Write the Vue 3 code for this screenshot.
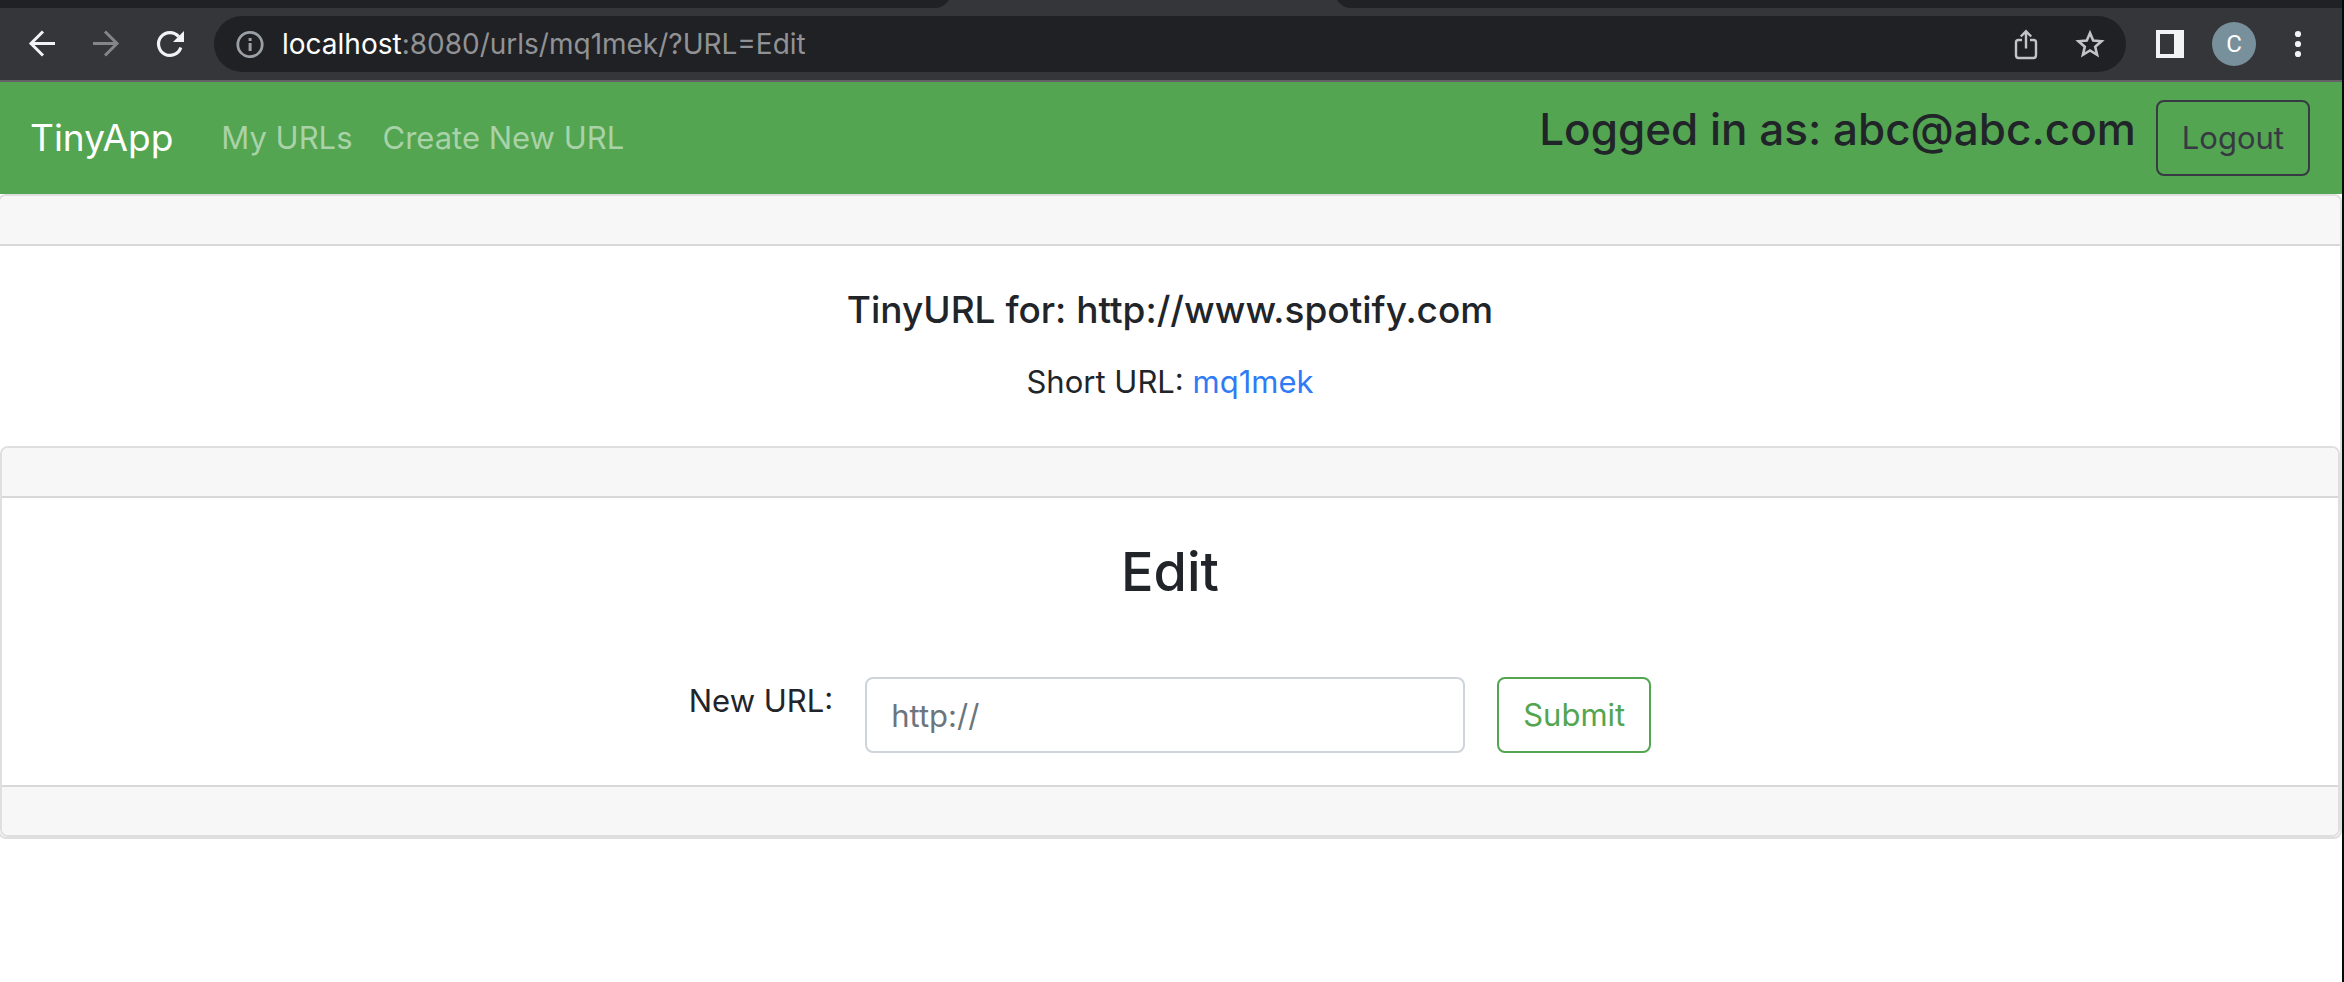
<script setup>
import { ref } from 'vue'

const email = 'abc@abc.com'
const longUrl = 'http://www.spotify.com'
const shortUrl = 'mq1mek'
const newUrl = ref('')
</script>

<template>
  <div class="window">
    <header class="browser">
      <div class="tabs">
        <span class="tab-left"></span>
        <span class="tab-right"></span>
      </div>
      <div class="toolbar">
        <button class="icon-btn" type="button" aria-label="Back">
          <svg width="32" height="32" viewBox="0 0 32 32" fill="none" stroke="#f1f3f4" stroke-width="3">
            <path d="M29 15.5H5M17 3.5L5 15.5L17 27.5" />
          </svg>
        </button>
        <button class="icon-btn" type="button" aria-label="Forward">
          <svg width="32" height="32" viewBox="0 0 32 32" fill="none" stroke="#84858a" stroke-width="3">
            <path d="M3 15.5H27M15 3.5L27 15.5L15 27.5" />
          </svg>
        </button>
        <button class="icon-btn" type="button" aria-label="Reload">
          <svg width="32" height="32" viewBox="0 0 32 32">
            <path d="M26.8 19.5A11.4 11.4 0 1 1 24.6 8.6" fill="none" stroke="#f1f3f4" stroke-width="3.2" />
            <path d="M30 3V14H19Z" fill="#f1f3f4" />
          </svg>
        </button>
        <div class="omnibox">
          <svg width="28" height="28" viewBox="0 0 28 28">
            <circle cx="14" cy="14.5" r="12.2" fill="none" stroke="#9aa0a6" stroke-width="2.8" />
            <path d="M12.6 8H15.6V11H12.6ZM12.6 13H15.6V21H12.6Z" fill="#9aa0a6" />
          </svg>
          <span class="address"><b>localhost</b>:8080/urls/mq1mek/?URL=Edit</span>
          <button class="icon-btn" type="button" aria-label="Share">
            <svg width="32" height="32" viewBox="0 0 32 32" fill="none" stroke="#c3c4c7" stroke-width="2.4">
              <path d="M12 12H8.5Q6 12 6 14.500V27Q6 30 8.500 30H23.500Q26 30 26 27V14.500Q26 12 23.500 12H20M16 20.500V4M10.800 8.500L16 3.300L21.200 8.500" />
            </svg>
          </button>
          <button class="icon-btn" type="button" aria-label="Bookmark">
            <svg width="32" height="32" viewBox="0 0 32 32" fill="none" stroke="#c3c4c7" stroke-width="2.6">
              <path d="M16 5L19.200 12.600L27.500 13.300L21.200 18.700L23.100 26.800L16 22.500L8.900 26.800L10.800 18.700L4.500 13.300L12.800 12.600Z" />
            </svg>
          </button>
        </div>
        <button class="icon-btn" type="button" aria-label="Side panel">
          <svg width="32" height="32" viewBox="0 0 32 32">
            <path d="M2 2H30V30H2ZM6 6V26H20V6Z" fill="#f1f3f4" fill-rule="evenodd" />
          </svg>
        </button>
        <button class="avatar" type="button" aria-label="Profile">C</button>
        <button class="icon-btn" type="button" aria-label="Menu">
          <svg width="32" height="32" viewBox="0 0 32 32" fill="#f1f3f4">
            <circle cx="16" cy="6" r="3.1" />
            <circle cx="16" cy="16" r="3.1" />
            <circle cx="16" cy="26" r="3.1" />
          </svg>
        </button>
      </div>
    </header>

    <nav class="navbar">
      <a class="brand" href="#">TinyApp</a>
      <a class="nav-link" href="#">My URLs</a>
      <a class="nav-link" href="#">Create New URL</a>
      <form class="account" @submit.prevent>
        <h3>Logged in as: {{ email }}</h3>
        <button class="btn dark" type="submit">Logout</button>
      </form>
    </nav>

    <main class="card outer">
      <div class="strip top"></div>
      <section class="details">
        <h5>TinyURL for: {{ longUrl }}</h5>
        <p>Short URL: <a href="#">{{ shortUrl }}</a></p>
      </section>
      <section class="card inner">
        <div class="strip top"></div>
        <div class="edit">
          <h2>Edit</h2>
          <form class="edit-form" @submit.prevent>
            <label for="new-url">New URL:</label>
            <input id="new-url" v-model="newUrl" type="text" placeholder="http://" />
            <button class="btn green" type="submit">Submit</button>
          </form>
        </div>
        <div class="strip bottom"></div>
      </section>
    </main>
  </div>
</template>

<style>
body {
  margin: 0;
  background: #fff;
}
</style>

<style scoped>
* {
  box-sizing: border-box;
}
.window {
  min-height: 100vh;
  border-right: 2px solid #020b0c;
  overflow: hidden;
  font-family: Inter, "Liberation Sans", sans-serif;
  font-size: 31px;
  line-height: 48px;
  color: #212529;
  background: #fff;
}
button,
input {
  font: inherit;
}
a {
  text-decoration: none;
}
h2,
h3,
h5,
p {
  margin: 0;
}
.browser {
  background: #35363a;
  border-bottom: 2px solid #656166;
}
.tabs {
  display: flex;
  justify-content: space-between;
  align-items: flex-end;
  height: 8px;
  overflow: hidden;
}
.tab-left,
.tab-right {
  flex: none;
  height: 24px;
  background: #202124;
}
.tab-left {
  width: 40.6%;
  border-bottom-right-radius: 16px;
}
.tab-right {
  width: 43%;
  border-bottom-left-radius: 16px;
}
.toolbar {
  display: flex;
  align-items: center;
  gap: 32px;
  height: 72px;
  padding: 0 28px 0 26px;
}
.icon-btn {
  flex: none;
  width: 32px;
  height: 32px;
  padding: 0;
  border: 0;
  background: none;
}
svg {
  display: block;
  flex: none;
}
.omnibox {
  flex: 1;
  display: flex;
  align-items: center;
  gap: 32px;
  height: 56px;
  margin: 0 -4px 0 -4px;
  padding: 0 20px 0 22px;
  border-radius: 28px;
  background: #202124;
}
.address {
  flex: 1;
  margin-left: -14px;
  font-size: 28px;
  color: #919295;
}
.address b {
  font-weight: 400;
  color: #fff;
}
.avatar {
  flex: none;
  width: 44px;
  height: 44px;
  margin: 0 -6px;
  padding: 0;
  border: 0;
  border-radius: 50%;
  font-family: Roboto, sans-serif;
  font-size: 24px;
  line-height: 44px;
  color: #fff;
  background: #78909c;
}
.navbar {
  display: flex;
  align-items: center;
  gap: 30px;
  height: 112px;
  padding: 0 32px 0 30px;
  background: #53a551;
}
.brand {
  margin-right: 18px;
  font-size: 37px;
  color: #fff;
}
.nav-link {
  color: #a9d2a8;
}
.account {
  display: flex;
  gap: 20px;
  margin-left: auto;
}
h3 {
  font-size: 44px;
  line-height: 58px;
  font-weight: 500;
}
.btn {
  height: 76px;
  padding: 0 24px;
  border: 2px solid;
  border-radius: 8px;
  background: none;
}
.dark {
  color: #373a42;
}
.green {
  color: #53a551;
}
.card {
  border: 2px solid #dfdfdf;
  border-radius: 8px;
}
.outer {
  margin-left: -2px;
}
.strip {
  height: 50px;
  background: #f7f7f7;
}
.top {
  border-bottom: 2px solid #d8d8d8;
  border-radius: 6px 6px 0 0;
}
.bottom {
  border-top: 2px solid #d8d8d8;
  border-radius: 0 0 6px 6px;
}
.details {
  padding: 40px;
  text-align: center;
}
h5 {
  margin-bottom: 24px;
  font-size: 37px;
  line-height: 48px;
  font-weight: 500;
}
.details a {
  color: #2f7bf6;
}
.edit {
  padding: 40px 40px 32px;
}
h2 {
  margin-bottom: 72px;
  font-size: 54px;
  line-height: 67px;
  font-weight: 500;
  text-align: center;
}
.edit-form {
  display: flex;
  justify-content: center;
  align-items: flex-start;
  gap: 32px;
}
.edit-form input {
  width: 600px;
  height: 76px;
  padding: 0 24px;
  border: 2px solid #ced4da;
  border-radius: 8px;
  color: #495057;
  background: #fff;
}
.edit-form input::placeholder {
  color: #6c757d;
  opacity: 1;
}
</style>
